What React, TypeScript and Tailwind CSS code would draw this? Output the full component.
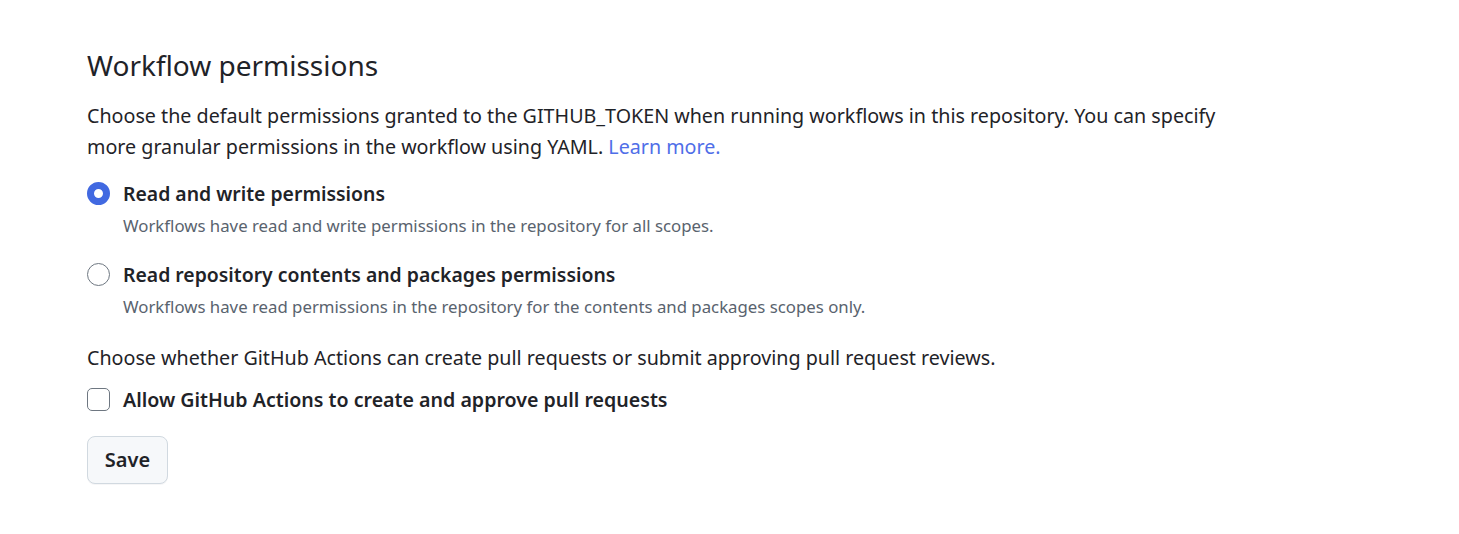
import React, { useState } from 'react';

const font = { fontFamily: '"Noto Sans", "Liberation Sans", sans-serif' };

type OptionProps = {
  checked: boolean;
  title: string;
  note: string;
  onSelect: () => void;
};

const RadioOption: React.FC<OptionProps> = ({ checked, title, note, onSelect }) => (
  <label className="flex flex-row items-start cursor-pointer" onClick={onSelect}>
    <span
      className={
        checked
          ? 'mt-[1px] w-[23px] h-[23px] rounded-full border-[7px] border-[#4169e1] bg-white shrink-0'
          : 'mt-[1px] w-[23px] h-[23px] rounded-full border border-[#6e7781] bg-white shrink-0'
      }
    />
    <div className="ml-[13px]">
      <div className="text-[19.4px] leading-[25px] font-semibold text-[#1f2328]">{title}</div>
      <div className="text-[16.8px] leading-[22px] text-[#59636e] mt-[9px]">{note}</div>
    </div>
  </label>
);

export default function App() {
  const [mode, setMode] = useState<'write' | 'read'>('write');
  const [allowPr, setAllowPr] = useState(false);

  return (
    <div className="min-h-screen bg-white" style={font}>
      <div className="pl-[87px] pt-[48px]">
        <h2 className="text-[28px] leading-[34px] font-normal text-[#1f2328]">Workflow permissions</h2>

        <p className="mt-[18px] text-[19.7px] leading-[31px] text-[#1f2328] max-w-[1150px]">
          Choose the default permissions granted to the GITHUB_TOKEN when running workflows in this
          repository. You can specify more granular permissions in the workflow using YAML.{' '}
          <a href="#" className="text-[#4f6ee8]">
            Learn more.
          </a>
        </p>

        <div className="mt-[19px] flex flex-col gap-[25px]">
          <RadioOption
            checked={mode === 'write'}
            title="Read and write permissions"
            note="Workflows have read and write permissions in the repository for all scopes."
            onSelect={() => setMode('write')}
          />
          <RadioOption
            checked={mode === 'read'}
            title="Read repository contents and packages permissions"
            note="Workflows have read permissions in the repository for the contents and packages scopes only."
            onSelect={() => setMode('read')}
          />
        </div>

        <p className="mt-[24px] text-[19.7px] leading-[31px] text-[#1f2328]">
          Choose whether GitHub Actions can create pull requests or submit approving pull request reviews.
        </p>

        <label className="mt-[14px] flex flex-row items-center cursor-pointer">
          <input
            type="checkbox"
            checked={allowPr}
            onChange={e => setAllowPr(e.target.checked)}
            className="appearance-none w-[23px] h-[23px] rounded-[5px] border border-[#6e7781] bg-white checked:bg-[#4169e1] checked:border-[#4169e1]"
          />
          <span className="ml-[13px] text-[19.6px] leading-[25px] font-semibold text-[#1f2328]">
            Allow GitHub Actions to create and approve pull requests
          </span>
        </label>

        <button className="mt-[24px] w-[81px] h-[48px] rounded-[8px] border border-[#d1d9e0] bg-[#f6f8fa] text-[20px] font-semibold text-[#1f2328] shadow-[0_1px_0_rgba(31,35,40,0.04)]">
          Save
        </button>
      </div>
    </div>
  );
}
